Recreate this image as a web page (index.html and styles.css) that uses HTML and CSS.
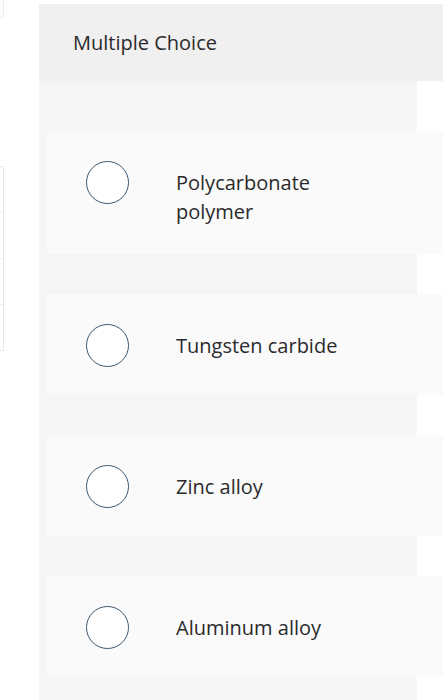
FILE: index.html
```html
<!DOCTYPE html>
<html lang="en">
<head>
    <meta charset="UTF-8">
    <meta name="viewport" content="width=device-width, initial-scale=1.0">
    <title>Multiple Choice</title>
    <link rel="stylesheet" href="styles.css">
</head>
<body>
    <div class="page">
        <aside class="side">
            <div class="side-top"></div>
            <ul class="side-list">
                <li></li>
                <li></li>
                <li></li>
                <li></li>
            </ul>
        </aside>

        <main class="question">
            <header class="question-head">Multiple Choice</header>

            <div class="answers">
                <label class="answer">
                    <span class="radio"></span>
                    <span class="answer-text">Polycarbonate<br>polymer</span>
                </label>
                <label class="answer">
                    <span class="radio"></span>
                    <span class="answer-text">Tungsten carbide</span>
                </label>
                <label class="answer">
                    <span class="radio"></span>
                    <span class="answer-text">Zinc alloy</span>
                </label>
                <label class="answer">
                    <span class="radio"></span>
                    <span class="answer-text">Aluminum alloy</span>
                </label>
            </div>
        </main>
    </div>
</body>
</html>
```

FILE: styles.css
```css
body {
    margin: 0;
    background: #fff;
    font-family: "Open Sans", Lato, sans-serif;
    color: #2b2b2b;
    overflow: hidden;
}
.page {
    display: flex;
    height: 700px;
}
.side {
    width: 39px;
    flex-shrink: 0;
}
.side-top {
    width: 3px;
    height: 17px;
    border-right: 1px solid #ececec;
    border-bottom: 1px solid #ececec;
}
.side-list {
    list-style: none;
    margin: 148px 0 0;
    padding: 0;
    width: 3px;
    border: 1px solid #e8e8e8;
    border-left: none;
}
.side-list li {
    height: 45px;
    border-bottom: 1px solid #eeeeee;
}
.side-list li:last-child {
    border-bottom: none;
}
.question {
    flex: 1;
    margin-top: 4px;
    display: flex;
    flex-direction: column;
}
.question-head {
    background: #f0f0f0;
    height: 77px;
    display: flex;
    align-items: center;
    padding-left: 34px;
    font-size: 20px;
}
.answers {
    flex: 1;
    background: #f5f5f5;
    margin-right: 26px;
    padding: 50px 0 0 8px;
    display: flex;
    flex-direction: column;
    gap: 40px;
}
.answer {
    display: flex;
    align-items: flex-start;
    background: #fafafa;
    margin-right: -26px;
    padding: 30px 20px 28px 39px;
    cursor: pointer;
}
.radio {
    box-sizing: border-box;
    width: 43px;
    height: 43px;
    border: 1.6px solid #3a5670;
    border-radius: 50%;
    background: #fff;
    flex-shrink: 0;
}
.answer-text {
    margin-left: 47px;
    padding-top: 8px;
    font-size: 20px;
    line-height: 28.5px;
}
```
